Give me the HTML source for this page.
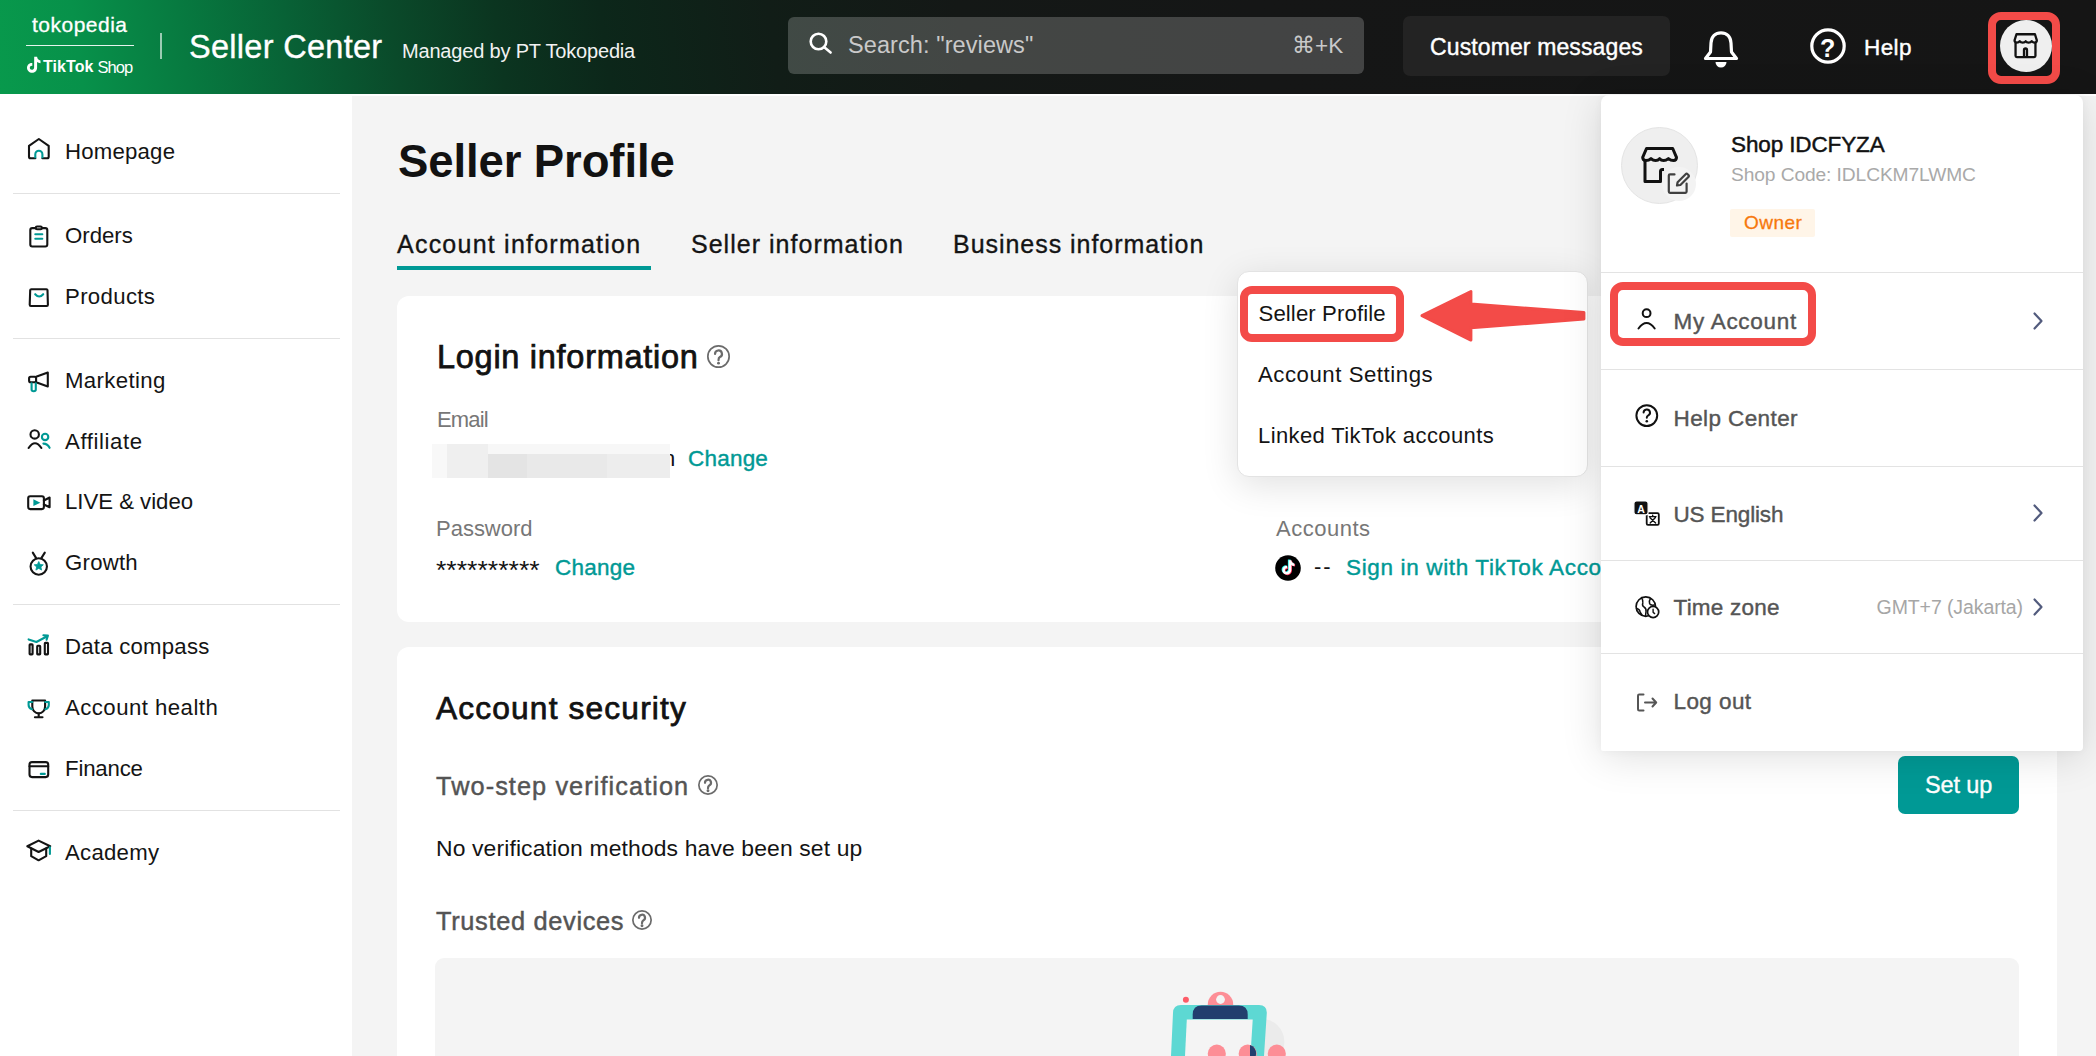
<!DOCTYPE html>
<html><head><meta charset="utf-8"><title>Seller Profile</title>
<style>
html,body{margin:0;padding:0;}
body{width:2096px;height:1056px;overflow:hidden;position:relative;background:#f4f4f4;font-family:'Liberation Sans', sans-serif;}
.t{position:absolute;white-space:nowrap;font-family:'Liberation Sans', sans-serif;}
svg{display:block;}
</style></head><body>
<div style="position:absolute;left:0px;top:0px;width:2096px;height:94px;background:linear-gradient(82deg,#08994c 0%,#07914a 4%,#077a40 9%,#086236 14%,#0a4a2a 19%,#0b3520 24%,#0c271a 29%,#111d17 37%,#141816 46%,#151616 60%,#151515 100%);"></div><div class="t" style="left:32px;top:13.5px;font-size:21px;line-height:21px;color:#ffffff;letter-spacing:0.49px;-webkit-text-stroke:0.3px #ffffff;">tokopedia</div><div style="position:absolute;left:26px;top:45px;width:108px;height:1px;background:rgba(255,255,255,0.9);"></div><svg style="position:absolute;left:26px;top:56px;" width="15" height="17" viewBox="0 0 15 17" fill="none"><path d="M8.2 0.8h2.9c0.2 2 1.5 3.4 3.4 3.6v2.8c-1.3 0-2.4-0.4-3.4-1.1v5.6c0 3-2.3 5.1-5 5.1S1 14.7 1 11.8c0-2.9 2.5-5 5.3-4.8v2.9c-1.2-0.3-2.5 0.6-2.5 1.9 0 1.1 0.9 2 2 2s2.3-0.9 2.3-2.1z" fill="#fff"/></svg><div class="t" style="left:43px;top:59px;font-size:16px;line-height:16px;color:#ffffff;font-weight:700;letter-spacing:0.07px;">TikTok</div><div class="t" style="left:97.5px;top:58.5px;font-size:16.5px;line-height:16.5px;color:#ffffff;letter-spacing:-0.93px;">Shop</div><div style="position:absolute;left:160px;top:33px;width:2px;height:26px;background:rgba(255,255,255,0.6);"></div><div class="t" style="left:189px;top:30.5px;font-size:32.5px;line-height:32.5px;color:#ffffff;letter-spacing:0.29px;-webkit-text-stroke:0.35px #ffffff;">Seller Center</div><div class="t" style="left:402px;top:41px;font-size:20px;line-height:20px;color:#f2f2f2;letter-spacing:-0.18px;">Managed by PT Tokopedia</div><div style="position:absolute;left:788px;top:17px;width:576px;height:57px;background:rgba(255,255,255,0.2);border-radius:6px;"></div><svg style="position:absolute;left:806px;top:29px;" width="30" height="30" viewBox="0 0 30 30" fill="none"><circle cx="12.5" cy="12.5" r="7.8" stroke="#fff" stroke-width="2.6"/><path d="M18.6 18.6l6 4.9" stroke="#fff" stroke-width="2.6" stroke-linecap="round"/></svg><div class="t" style="left:848px;top:34px;font-size:23.5px;line-height:23.5px;color:#c9c9c9;letter-spacing:0.09px;">Search: "reviews"</div><div class="t" style="left:1292px;top:35px;font-size:22.5px;line-height:22.5px;color:#c9c9c9;">⌘+K</div><div style="position:absolute;left:1403px;top:16px;width:267px;height:60px;background:#232323;border-radius:7px;"></div><div class="t" style="left:1430px;top:35.5px;font-size:23px;line-height:23px;color:#ffffff;letter-spacing:0.12px;-webkit-text-stroke:0.4px #ffffff;">Customer messages</div><svg style="position:absolute;left:1700px;top:28px;" width="42" height="42" viewBox="0 0 42 42" fill="none"><path d="M5.5 30.5 L10.5 24 L11 15 C11.3 8.5 15.5 4.8 21 4.8 C26.5 4.8 30.7 8.5 31 15 L31.5 24 L36.5 30.5 Z" stroke="#fff" stroke-width="3.2" stroke-linejoin="round"/><path d="M15.5 34 H26.5 A5.5 5.5 0 0 1 15.5 34 Z" fill="#fff"/></svg><svg style="position:absolute;left:1808px;top:26px;" width="40" height="40" viewBox="0 0 40 40" fill="none"><circle cx="20" cy="20" r="16.2" stroke="#fff" stroke-width="3.2"/></svg><div class="t" style="left:1820px;top:36px;font-size:25px;line-height:25px;color:#ffffff;font-weight:700;">?</div><div class="t" style="left:1864px;top:37px;font-size:22.5px;line-height:22.5px;color:#ffffff;letter-spacing:0.38px;-webkit-text-stroke:0.4px #ffffff;">Help</div><div style="position:absolute;left:1988px;top:12px;width:56px;height:56px;border:8px solid #f34b48;border-radius:13px;"></div><div style="position:absolute;left:2000px;top:20px;width:52px;height:52px;background:#efefef;border-radius:50%;"></div><svg style="position:absolute;left:2010px;top:30px;" width="32" height="32" viewBox="0 0 32 32" fill="none"><g stroke="#111" stroke-width="2.3" stroke-linejoin="round" fill="none"><path d="M6.45 4.25 H24.95 L26.85 10.3 Q26.85 12.6 24.6 12.6 Q22.6 12.6 21.7 11.2 Q20.8 12.6 18.6 12.6 Q16.5 12.6 15.7 11.2 Q14.9 12.6 12.8 12.6 Q10.6 12.6 9.7 11.2 Q8.8 12.6 6.8 12.6 Q4.55 12.6 4.55 10.3 Z"/><path d="M5.55 12.8 V25.8 Q5.55 27.05 6.8 27.05 H24.2 Q25.45 27.05 25.45 25.8 V12.8"/><path d="M14 27.05 V20 A1.5 1.5 0 0 1 17 20 V27.05"/></g></svg><div style="position:absolute;left:0px;top:94px;width:352px;height:962px;background:#ffffff;"></div><div style="position:absolute;left:352px;top:94px;width:1744px;height:1.5px;background:#ffffff;"></div><div style="position:absolute;left:13px;top:193px;width:327px;height:1px;background:#e2e2e2;"></div><div style="position:absolute;left:13px;top:338px;width:327px;height:1px;background:#e2e2e2;"></div><div style="position:absolute;left:13px;top:604px;width:327px;height:1px;background:#e2e2e2;"></div><div style="position:absolute;left:13px;top:810px;width:327px;height:1px;background:#e2e2e2;"></div><div class="t" style="left:65px;top:141px;font-size:22.2px;line-height:22.2px;color:#141414;letter-spacing:0.21px;">Homepage</div><div class="t" style="left:65px;top:225px;font-size:22.2px;line-height:22.2px;color:#141414;">Orders</div><div class="t" style="left:65px;top:286px;font-size:22.2px;line-height:22.2px;color:#141414;letter-spacing:0.34px;">Products</div><div class="t" style="left:65px;top:370px;font-size:22.2px;line-height:22.2px;color:#141414;letter-spacing:0.37px;">Marketing</div><div class="t" style="left:65px;top:431px;font-size:22.2px;line-height:22.2px;color:#141414;letter-spacing:0.58px;">Affiliate</div><div class="t" style="left:65px;top:491px;font-size:22.2px;line-height:22.2px;color:#141414;letter-spacing:-0.02px;">LIVE &amp; video</div><div class="t" style="left:65px;top:552px;font-size:22.2px;line-height:22.2px;color:#141414;letter-spacing:0.24px;">Growth</div><div class="t" style="left:65px;top:636px;font-size:22.2px;line-height:22.2px;color:#141414;letter-spacing:0.23px;">Data compass</div><div class="t" style="left:65px;top:697px;font-size:22.2px;line-height:22.2px;color:#141414;letter-spacing:0.46px;">Account health</div><div class="t" style="left:65px;top:758px;font-size:22.2px;line-height:22.2px;color:#141414;letter-spacing:-0.17px;">Finance</div><div class="t" style="left:65px;top:842px;font-size:22.2px;line-height:22.2px;color:#141414;letter-spacing:0.25px;">Academy</div><svg style="position:absolute;left:0;top:0" width="352" height="1056" viewBox="0 0 352 1056" fill="none">
<g stroke="#141414" stroke-width="2.1" stroke-linecap="round" stroke-linejoin="round">
<path d="M35.3 158.3 H30.5 Q29 158.3 29 156.8 V145.8 L38.85 139 L48.7 145.8 V156.8 Q48.7 158.3 47.2 158.3 H42.4"/>
<rect x="30.3" y="228.1" width="17" height="18.4" rx="2"/>
<rect x="35.8" y="226.5" width="6" height="2.8" rx="1.2" fill="#fff"/>
<path d="M31.3 289.2 H46.4 Q47.4 289.2 47.5 290.2 L47.9 304.8 Q47.9 306 46.7 306 H30.9 Q29.7 306 29.7 304.8 L30.2 290.2 Q30.3 289.2 31.3 289.2 Z"/>
<rect x="29.1" y="376.7" width="7" height="5.5" rx="1.5"/>
<path d="M36.1 376.7 L47.8 372.5 V386.4 L36.1 382.2"/>
<circle cx="34.7" cy="434.4" r="4.2"/>
<path d="M28.6 448 Q35 438.5 41.4 448"/>
<rect x="28.2" y="496.2" width="15.7" height="12.9" rx="2"/>
<path d="M43.9 500.5 L49.6 497.5 V507.3 L43.9 504.5"/>
<circle cx="38.75" cy="566.5" r="8.2"/>
<path d="M32.8 552.6 L36.3 558.4 M44.8 552.6 L41.2 558.4"/>
<rect x="29.6" y="644.4" width="3" height="10" rx="0.6"/>
<rect x="37.2" y="645.8" width="3" height="8.6" rx="0.6"/>
<rect x="44.8" y="642.9" width="3.2" height="11.5" rx="0.6"/>
<path d="M32.3 700.5 H45.1 V706.5 A6.4 6.9 0 0 1 32.3 706.5 Z"/>
<path d="M38.7 713.5 V717 M34.9 717.2 H42.5"/>
<rect x="29.5" y="762.1" width="18.7" height="15" rx="2.5"/>
<path d="M29.5 766.3 H48.2"/>
<path d="M27.3 846.3 L38.6 840.6 L50.2 846.3 L38.6 852 Z"/>
<path d="M31.2 848.6 V856.2 L38.6 860.3 L46.2 856.2 V848.6"/>
</g>
<g stroke="#009995" stroke-width="2.1" stroke-linecap="round" stroke-linejoin="round">
<path d="M35.3 158.3 V154.3 A3.55 3.55 0 0 1 42.4 154.3 V158.3" stroke-linecap="butt"/>
<path d="M35.3 234.2 H42.3 M35.3 238.7 H42.3"/>
<path d="M35.2 294.2 Q39.2 298.8 43.2 294.2"/>
<path d="M31.6 383.4 V389.6 Q31.6 391.2 33.7 391.2 Q35.8 391.2 35.8 389.6 V383.4"/>
<circle cx="45.1" cy="436.9" r="3.2"/>
<path d="M43.4 443.6 Q47.6 443.6 49.6 447.8"/>
<path d="M28.6 639.4 L36.4 642 L47.2 636.2 M43.4 635.3 L47.9 635.6 L46.6 639.8"/>
<path d="M32.3 702 H28.6 V705 Q28.6 708.2 32 709.2 M45.1 702 H48.8 V705 Q48.8 708.2 45.4 709.2"/>
<path d="M40.8 773.9 H44.8"/>
<path d="M49.9 847.2 V854"/>
</g>
<path d="M33.4 499.3 L40.4 502.7 L33.4 506.1 Z" fill="#009995"/>
<path d="M38.75 561.5 L40.1 564.5 L43.3 564.8 L40.9 566.9 L41.6 570.1 L38.75 568.4 L35.9 570.1 L36.6 566.9 L34.2 564.8 L37.4 564.5 Z" fill="#009995" stroke="#009995" stroke-width="0.8" stroke-linejoin="round"/>
</svg><div class="t" style="left:398px;top:139px;font-size:45.5px;line-height:45.5px;color:#121212;font-weight:700;letter-spacing:-0.11px;">Seller Profile</div><div class="t" style="left:397px;top:232px;font-size:25px;line-height:25px;color:#141414;letter-spacing:1.23px;-webkit-text-stroke:0.35px #141414;">Account information</div><div class="t" style="left:691px;top:232px;font-size:25px;line-height:25px;color:#141414;letter-spacing:1.02px;-webkit-text-stroke:0.35px #141414;">Seller information</div><div class="t" style="left:953px;top:232px;font-size:25px;line-height:25px;color:#141414;letter-spacing:0.96px;-webkit-text-stroke:0.35px #141414;">Business information</div><div style="position:absolute;left:397px;top:266px;width:254px;height:3.5px;background:#009995;"></div><div style="position:absolute;left:397px;top:296px;width:1660px;height:326px;background:#ffffff;border-radius:12px;"></div><div class="t" style="left:437px;top:340.5px;font-size:32.5px;line-height:32.5px;color:#121212;letter-spacing:0.72px;-webkit-text-stroke:0.75px #121212;">Login information</div><svg style="position:absolute;left:705.3px;top:342.9px;" width="27.0" height="27.0" viewBox="0 0 27.0 27.0" fill="none"><circle cx="13.5" cy="13.5" r="10.65" stroke="#6b6b6b" stroke-width="1.7"/><path d="M10.05 10.97 A3.45 3.45 0 1 1 14.88 14.07 Q13.50 14.88 13.50 17.18" stroke="#6b6b6b" stroke-width="2.21" stroke-linecap="round" fill="none"/><circle cx="13.5" cy="20.17" r="1.44" fill="#6b6b6b"/></svg><div class="t" style="left:437px;top:409px;font-size:22px;line-height:22px;color:#777777;letter-spacing:-0.86px;">Email</div><div style="position:absolute;left:432px;top:444px;width:15px;height:34px;background:#f8f8f8;"></div><div style="position:absolute;left:447px;top:444px;width:41px;height:34px;background:#efefef;"></div><div style="position:absolute;left:488px;top:444px;width:182px;height:10px;background:#f7f7f7;"></div><div style="position:absolute;left:488px;top:454px;width:39px;height:24px;background:#e4e4e4;"></div><div style="position:absolute;left:527px;top:454px;width:80px;height:24px;background:#e9e9e9;"></div><div style="position:absolute;left:607px;top:454px;width:63px;height:24px;background:#ededed;"></div><div class="t" style="left:663px;top:448px;font-size:22px;line-height:22px;color:#141414;clip-path:inset(0 0 0 7px);">n</div><div class="t" style="left:688px;top:448px;font-size:22.5px;line-height:22.5px;color:#009995;letter-spacing:0.21px;-webkit-text-stroke:0.4px #009995;">Change</div><div class="t" style="left:436px;top:518px;font-size:22px;line-height:22px;color:#777777;letter-spacing:-0.01px;">Password</div><div class="t" style="left:436px;top:557px;font-size:26.6px;line-height:26.6px;color:#141414;letter-spacing:0.02px;">**********</div><div class="t" style="left:555px;top:557px;font-size:22.5px;line-height:22.5px;color:#009995;letter-spacing:0.23px;-webkit-text-stroke:0.4px #009995;">Change</div><div class="t" style="left:1276px;top:518px;font-size:22px;line-height:22px;color:#777777;letter-spacing:0.50px;">Accounts</div><svg style="position:absolute;left:1275px;top:555px;" width="26" height="26" viewBox="0 0 26 26" fill="none"><circle cx="13" cy="13" r="12.8" fill="#000"/><path d="M13.6 6.2h2.3c0.15 1.55 1.15 2.65 2.65 2.8v2.2c-1 0-1.9-0.3-2.65-0.85v4.35c0 2.35-1.8 4-3.9 4s-3.9-1.6-3.9-3.85c0-2.25 1.95-3.9 4.15-3.75v2.25c-0.95-0.25-1.95 0.45-1.95 1.5 0 0.85 0.7 1.55 1.55 1.55s1.75-0.7 1.75-1.65z" fill="#25f4ee" transform="translate(13 13) scale(1.15) translate(-13.7 -13.5)"/><path d="M13.6 6.2h2.3c0.15 1.55 1.15 2.65 2.65 2.8v2.2c-1 0-1.9-0.3-2.65-0.85v4.35c0 2.35-1.8 4-3.9 4s-3.9-1.6-3.9-3.85c0-2.25 1.95-3.9 4.15-3.75v2.25c-0.95-0.25-1.95 0.45-1.95 1.5 0 0.85 0.7 1.55 1.55 1.55s1.75-0.7 1.75-1.65z" fill="#fe2c55" transform="translate(13 13) scale(1.15) translate(-12.4 -12.5)"/><path d="M13.6 6.2h2.3c0.15 1.55 1.15 2.65 2.65 2.8v2.2c-1 0-1.9-0.3-2.65-0.85v4.35c0 2.35-1.8 4-3.9 4s-3.9-1.6-3.9-3.85c0-2.25 1.95-3.9 4.15-3.75v2.25c-0.95-0.25-1.95 0.45-1.95 1.5 0 0.85 0.7 1.55 1.55 1.55s1.75-0.7 1.75-1.65z" fill="#fff" transform="translate(13 13) scale(1.15) translate(-13 -13)"/></svg><div class="t" style="left:1314px;top:556px;font-size:22px;line-height:22px;color:#141414;letter-spacing:1.92px;">--</div><div class="t" style="left:1346px;top:557px;font-size:22.5px;line-height:22.5px;color:#009995;-webkit-text-stroke:0.4px #009995;letter-spacing:0.65px;">Sign in with TikTok Account</div><div style="position:absolute;left:397px;top:647px;width:1660px;height:500px;background:#ffffff;border-radius:12px;"></div><div class="t" style="left:436px;top:693px;font-size:31.7px;line-height:31.7px;color:#121212;letter-spacing:1.16px;-webkit-text-stroke:0.75px #121212;">Account security</div><div class="t" style="left:436px;top:774px;font-size:25.3px;line-height:25.3px;color:#545454;letter-spacing:1.08px;-webkit-text-stroke:0.45px #545454;">Two-step verification</div><svg style="position:absolute;left:696.4px;top:773.1px;" width="24" height="24" viewBox="0 0 24 24" fill="none"><circle cx="12" cy="12" r="9.15" stroke="#6b6b6b" stroke-width="1.7"/><path d="M9.00 9.80 A3.00 3.00 0 1 1 13.20 12.50 Q12.00 13.20 12.00 15.20" stroke="#6b6b6b" stroke-width="2.21" stroke-linecap="round" fill="none"/><circle cx="12" cy="17.80" r="1.44" fill="#6b6b6b"/></svg><div class="t" style="left:436px;top:837px;font-size:22.9px;line-height:22.9px;color:#141414;letter-spacing:0.13px;">No verification methods have been set up</div><div class="t" style="left:436px;top:908.6px;font-size:25.4px;line-height:25.4px;color:#545454;letter-spacing:0.66px;-webkit-text-stroke:0.45px #545454;">Trusted devices</div><svg style="position:absolute;left:630px;top:908px;" width="24" height="24" viewBox="0 0 24 24" fill="none"><circle cx="12" cy="12" r="9.15" stroke="#6b6b6b" stroke-width="1.7"/><path d="M9.00 9.80 A3.00 3.00 0 1 1 13.20 12.50 Q12.00 13.20 12.00 15.20" stroke="#6b6b6b" stroke-width="2.21" stroke-linecap="round" fill="none"/><circle cx="12" cy="17.80" r="1.44" fill="#6b6b6b"/></svg><div style="position:absolute;left:1898px;top:756px;width:121px;height:58px;background:#009995;border-radius:7px;"></div><div class="t" style="left:1925px;top:774px;font-size:23.5px;line-height:23.5px;color:#ffffff;letter-spacing:-0.11px;-webkit-text-stroke:0.35px #ffffff;">Set up</div><div style="position:absolute;left:435px;top:958px;width:1584px;height:300px;background:#f4f4f4;border-radius:9px;"></div><svg style="position:absolute;left:1160px;top:985px;" width="130" height="71" viewBox="0 0 130 71" fill="none">
<circle cx="101.4" cy="56.8" r="23" fill="#ebebeb"/>
<circle cx="25.9" cy="14.8" r="3" fill="#fd5c68"/>
<circle cx="60.5" cy="19.5" r="12.7" fill="#fd8e96"/>
<circle cx="60.5" cy="14.5" r="4.4" fill="#f4f4f4"/>
<path d="M21 20 H99 Q107 20 106.8 28 L104 71 H11 L13 28 Q13.2 20 21 20 Z" fill="#5dd8d3"/>
<path d="M26.8 34.5 H92.7 L90.5 71 H25 Z" fill="#f4f4f4"/>
<path d="M41.7 20.5 H78.7 Q87.7 20.5 87.7 29.5 V34 H32.7 V29.5 Q32.7 20.5 41.7 20.5 Z" fill="#223f6e"/>
<circle cx="56.8" cy="68.6" r="9" fill="#fd8e96"/>
<circle cx="87.7" cy="68.6" r="9" fill="#fd8e96"/>
<path d="M90 60 A9 9 0 0 1 90 77 Z" fill="#223f6e"/>
<circle cx="116.8" cy="68.6" r="9" fill="#fd8e96"/>
</svg><div style="position:absolute;left:1237px;top:271px;width:351px;height:206px;box-sizing:border-box;background:#ffffff;border:1px solid #e3e3e3;border-radius:12px;box-shadow:0 8px 36px rgba(0,0,0,0.12);"></div><div style="position:absolute;left:1240px;top:286px;width:164px;height:56px;box-sizing:border-box;border:8px solid #f34b48;border-radius:12px;"></div><div class="t" style="left:1258.5px;top:302.6px;font-size:22.2px;line-height:22.2px;color:#141414;letter-spacing:0.10px;">Seller Profile</div><div class="t" style="left:1258px;top:364.1px;font-size:22.2px;line-height:22.2px;color:#141414;letter-spacing:0.54px;">Account Settings</div><div class="t" style="left:1258px;top:424.7px;font-size:22px;line-height:22px;color:#141414;letter-spacing:0.39px;">Linked TikTok accounts</div><svg style="position:absolute;left:1400px;top:270px;" width="200" height="90" viewBox="0 0 200 90" fill="none"><path d="M22 45.7 L70.9 21.5 L70.9 34.1 L183.9 42.5 L183.9 49.1 L70.9 57.7 L70.9 70.1 Z" fill="#f34b48" stroke="#f34b48" stroke-width="3" stroke-linejoin="round"/></svg><div style="position:absolute;left:1601px;top:95px;width:482px;height:656px;background:#ffffff;border-radius:8px 8px 4px 2px;box-shadow:0 6px 40px rgba(0,0,0,0.13),0 0 8px rgba(0,0,0,0.04);"></div><div style="position:absolute;left:1621px;top:127px;width:77px;height:77px;box-sizing:border-box;background:#efefef;border:1px solid #e4e4e4;border-radius:50%;"></div><svg style="position:absolute;left:0;top:0" width="2096" height="1056" viewBox="0 0 2096 1056" fill="none"><g stroke="#111" stroke-width="3" stroke-linejoin="round"><path d="M1646.5 148.5 H1672.7 L1676.5 157.3 Q1676.5 160.6 1673.5 160.6 Q1670.8 160.6 1668.4 158.6 Q1666 160.6 1663.6 160.6 Q1661.2 160.6 1659.6 158.6 Q1658 160.6 1655.6 160.6 Q1653.2 160.6 1651 158.6 Q1648.8 160.6 1645.8 160.6 Q1642.7 160.6 1642.7 157.3 Z"/><path d="M1645 161 V181.5 H1660.5 V171.5 Q1660.5 169.5 1662.5 169.5 H1664"/></g><circle cx="1679" cy="184" r="17" fill="#f3f3f3"/><g stroke="#404040" stroke-width="2.2" stroke-linecap="round" stroke-linejoin="round"><path d="M1674.5 174.4 H1670 Q1668.8 174.4 1668.8 175.6 V191.6 Q1668.8 192.8 1670 192.8 H1685.4 Q1686.6 192.8 1686.6 191.6 V183.5"/><path d="M1677 185.5 L1677.6 182.2 L1685.6 174.2 Q1686.6 173.2 1687.6 174.2 L1688.4 175 Q1689.4 176 1688.4 177 L1680.4 185 Z"/></g></svg><div class="t" style="left:1731px;top:134.3px;font-size:22.5px;line-height:22.5px;color:#121212;letter-spacing:-0.12px;-webkit-text-stroke:0.45px #121212;">Shop IDCFYZA</div><div class="t" style="left:1731px;top:165.4px;font-size:19.2px;line-height:19.2px;color:#a9a9a9;letter-spacing:-0.10px;">Shop Code: IDLCKM7LWMC</div><div style="position:absolute;left:1730px;top:209px;width:85px;height:28px;background:#fff5e8;border-radius:2px;"></div><div class="t" style="left:1744px;top:213px;font-size:19px;line-height:19px;color:#f7780d;letter-spacing:0.47px;-webkit-text-stroke:0.3px #f7780d;">Owner</div><div style="position:absolute;left:1601px;top:272px;width:482px;height:1px;background:#e3e3e3;"></div><div style="position:absolute;left:1601px;top:369px;width:482px;height:1px;background:#e3e3e3;"></div><div style="position:absolute;left:1601px;top:466px;width:482px;height:1px;background:#e3e3e3;"></div><div style="position:absolute;left:1601px;top:560px;width:482px;height:1px;background:#e3e3e3;"></div><div style="position:absolute;left:1601px;top:653px;width:482px;height:1px;background:#e3e3e3;"></div><div style="position:absolute;left:1610px;top:282px;width:206px;height:64px;box-sizing:border-box;border:8px solid #f34b48;border-radius:13px;"></div><div class="t" style="left:1673.5px;top:310.8px;font-size:22.5px;line-height:22.5px;color:#555555;letter-spacing:0.72px;-webkit-text-stroke:0.4px #555555;">My Account</div><div class="t" style="left:1673.5px;top:408.3px;font-size:22.5px;line-height:22.5px;color:#555555;letter-spacing:0.40px;-webkit-text-stroke:0.4px #555555;">Help Center</div><div class="t" style="left:1673.5px;top:504.29999999999995px;font-size:22.5px;line-height:22.5px;color:#555555;letter-spacing:-0.15px;-webkit-text-stroke:0.4px #555555;">US English</div><div class="t" style="left:1673.5px;top:597.2px;font-size:22.5px;line-height:22.5px;color:#555555;letter-spacing:0.22px;-webkit-text-stroke:0.4px #555555;">Time zone</div><div class="t" style="left:1673.5px;top:691.2px;font-size:22.5px;line-height:22.5px;color:#555555;letter-spacing:0.42px;-webkit-text-stroke:0.4px #555555;">Log out</div><div class="t" style="left:1876.6px;top:598px;font-size:19.5px;line-height:19.5px;color:#a6a6a6;letter-spacing:-0.10px;">GMT+7 (Jakarta)</div><svg style="position:absolute;left:2030px;top:311px;" width="16" height="20" viewBox="0 0 16 20" fill="none"><path d="M4.5 2.5 L11.5 10 L4.5 17.5" stroke="#525b7d" stroke-width="2.2" stroke-linecap="round" stroke-linejoin="round"/></svg><svg style="position:absolute;left:2030px;top:503px;" width="16" height="20" viewBox="0 0 16 20" fill="none"><path d="M4.5 2.5 L11.5 10 L4.5 17.5" stroke="#525b7d" stroke-width="2.2" stroke-linecap="round" stroke-linejoin="round"/></svg><svg style="position:absolute;left:2030px;top:597px;" width="16" height="20" viewBox="0 0 16 20" fill="none"><path d="M4.5 2.5 L11.5 10 L4.5 17.5" stroke="#525b7d" stroke-width="2.2" stroke-linecap="round" stroke-linejoin="round"/></svg><svg style="position:absolute;left:0;top:0" width="2096" height="1056" viewBox="0 0 2096 1056" fill="none">
<g stroke="#111" stroke-width="2" stroke-linecap="round" stroke-linejoin="round" fill="none">
<circle cx="1646.6" cy="313.2" r="3.9"/>
<path d="M1638.5 328.5 Q1646.6 317.5 1654.7 328.5"/>
<circle cx="1646.8" cy="415.6" r="10.4"/>
<path d="M1643.6 412.6 A3.2 3.2 0 1 1 1648 415.6 Q1646.8 416.2 1646.8 417.8"/>
<rect x="1646.7" y="513.2" width="12.1" height="11.7" rx="1.3" stroke-width="1.8"/>
<path d="M1649.4 516.6 H1656 M1652.7 515.2 V516.6 M1650.2 523 L1655.4 517.6 M1650 517.8 L1655.6 523" stroke-width="1.4"/>
<circle cx="1645.8" cy="606.6" r="9.7" stroke-width="1.7"/>
<path d="M1641.5 597.6 Q1643.5 600.5 1642.8 603 Q1641.8 605.5 1644 607 Q1646.5 608.5 1646 611.5 L1645.5 616 M1650.5 598.5 Q1648.6 601.2 1649.6 603.6 Q1650.6 605.6 1654.2 605 M1636.5 608.5 Q1639.5 609 1640 611.5 Q1640.5 613.5 1642 614.8" stroke-width="1.5"/>
<circle cx="1653.1" cy="612" r="5.6" fill="#fff" stroke-width="1.7"/>
<path d="M1653.1 609.3 V612.3 L1654.6 613.6" stroke-width="1.4"/>
<path d="M1643.5 694.5 H1639.2 Q1638 694.5 1638 695.7 V709.3 Q1638 710.5 1639.2 710.5 H1643.5" stroke="#555"/>
<path d="M1645 702.5 H1656 M1652.5 698.5 L1656.2 702.5 L1652.5 706.5" stroke="#555"/>
</g>
<circle cx="1646.8" cy="421.3" r="1.3" fill="#111"/>
<rect x="1633.9" y="500.9" width="14.2" height="13.9" rx="2.6" fill="#111" stroke="#fff" stroke-width="1.2"/>
</svg><div class="t" style="left:1637.2px;top:504px;font-size:10.5px;line-height:10.5px;color:#ffffff;font-weight:700;">A</div>
</body></html>
